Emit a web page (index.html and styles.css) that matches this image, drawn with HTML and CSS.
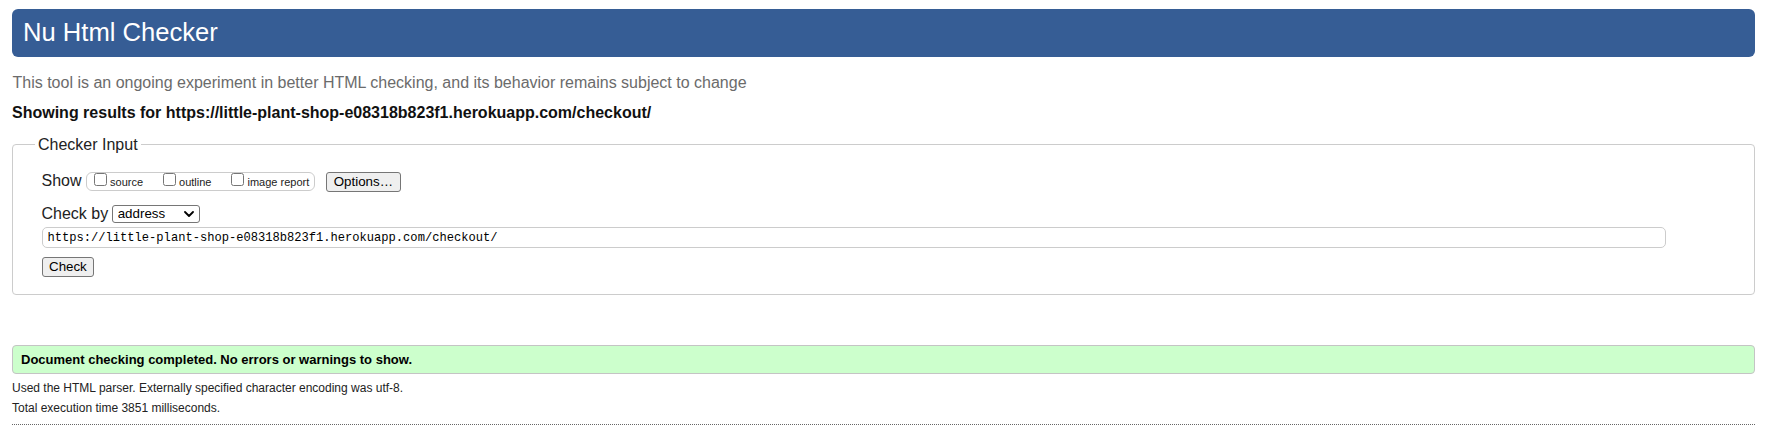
FILE: index.html
```html
<!DOCTYPE html>
<html lang="en">
<head>
<meta charset="utf-8">
<title>Nu Html Checker</title>
<link rel="stylesheet" href="styles.css">
</head>
<body>
<div class="page">
  <h1 class="banner">Nu Html Checker</h1>
  <p class="intro">This tool is an ongoing experiment in better HTML checking, and its behavior remains subject to change</p>
  <p class="showing">Showing results for https://little-plant-shop-e08318b823f1.herokuapp.com/checkout/</p>
  <fieldset class="checker">
    <legend class="checker-legend">Checker Input</legend>
    <div class="checker-body">
      <div class="row row-show">
        <span class="row-label">Show</span>
        <div class="opts">
          <label class="opt"><input type="checkbox" class="cb"><span class="opt-text">source</span></label>
          <label class="opt"><input type="checkbox" class="cb"><span class="opt-text">outline</span></label>
          <label class="opt opt-last"><input type="checkbox" class="cb"><span class="opt-text">image report</span></label>
        </div>
        <button type="button" class="btn btn-options">Options…</button>
      </div>
      <div class="row row-by">
        <span class="row-label">Check by</span>
        <span class="select-wrap">
          <select class="by-select"><option>address</option></select>
          <svg class="chevron" width="10" height="6" viewBox="0 0 10 6" aria-hidden="true"><path d="M1 1 L5 5 L9 1" fill="none" stroke="#000" stroke-width="1.8" stroke-linecap="round" stroke-linejoin="round"/></svg>
        </span>
      </div>
      <input class="url" type="text" value="https://little-plant-shop-e08318b823f1.herokuapp.com/checkout/">
      <div class="row row-submit">
        <button type="button" class="btn btn-check">Check</button>
      </div>
    </div>
  </fieldset>
  <div class="success">Document checking completed. No errors or warnings to show.</div>
  <p class="meta meta-first">Used the HTML parser. Externally specified character encoding was utf-8.</p>
  <p class="meta">Total execution time 3851 milliseconds.</p>
  <hr class="rule">
</div>
</body>
</html>
```

FILE: styles.css
```css
* { box-sizing: border-box; }

html, body {
  margin: 0;
  padding: 0;
  background: #ffffff;
}

body {
  font-family: "Liberation Sans", Arial, sans-serif;
  color: #111111;
  font-size: 16px;
}

.page {
  padding: 9px 36px 0 12px;
}

.banner {
  margin: 0;
  height: 48px;
  background: #365d95;
  color: #ffffff;
  border-radius: 6px;
  font-weight: normal;
  font-size: 25.6px;
  line-height: 46px;
  padding: 0 11px 2px 11px;
}

.intro {
  margin: 17px 0 0 0;
  font-size: 16px;
  line-height: 18px;
  color: #6b6b6b;
  padding-left: 0.5px;
}

.showing {
  margin: 12px 0 0 0;
  font-size: 16px;
  line-height: 18px;
  font-weight: bold;
  color: #111111;
}

.checker {
  margin: 13.5px 0 0 0;
  border: 1px solid #cccccc;
  border-radius: 4px;
  padding: 0 26px 17px 22px;
  min-width: 0;
}

.checker-legend {
  font-size: 16px;
  line-height: 18px;
  padding: 0 3px;
  color: #222222;
}

.checker-body {
  padding-left: 6.5px;
}

.row {
  display: flex;
  align-items: center;
}

.row-show {
  margin-top: 18.5px;
  height: 20px;
}

.row-label {
  font-size: 16px;
  line-height: 18px;
  color: #222222;
  margin-bottom: 3px;
}

.opts {
  display: flex;
  align-items: flex-start;
  height: 19px;
  margin-left: 4.5px;
  border: 1px solid #cccccc;
  border-radius: 6px;
  padding: 0 5px 0 3px;
  margin-top: -1px;
}

.opt {
  display: flex;
  align-items: flex-end;
  margin-right: 16px;
}

.opt-last {
  margin-right: 0;
}

.cb {
  width: 13px;
  height: 13px;
  margin: 0 3px 0 4px;
}

.opt-text {
  font-size: 11px;
  line-height: 11px;
  margin-bottom: -2px;
  color: #222222;
}

.btn {
  font-family: "Liberation Sans", Arial, sans-serif;
  font-size: 13.33px;
  height: 20px;
  padding: 0 6.5px;
  border: 1px solid #767676;
  border-radius: 3px;
  background: #efefef;
  color: #000000;
  line-height: 18px;
}

.btn-options {
  margin-left: 11px;
}

.row-by {
  margin-top: 13px;
  height: 18px;
}

.row-by .row-label {
  margin-bottom: 0;
}

.select-wrap {
  position: relative;
  display: block;
  margin-left: 3.5px;
  width: 88px;
  height: 18px;
}

.by-select {
  display: block;
  appearance: none;
  -webkit-appearance: none;
  width: 88px;
  height: 18px;
  font-family: "Liberation Sans", Arial, sans-serif;
  font-size: 13.33px;
  line-height: 16px;
  border: 1px solid #767676;
  border-radius: 3px;
  background: #ffffff;
  color: #000000;
  padding: 0 0 0 5px;
}

.chevron {
  position: absolute;
  left: 72px;
  top: 6px;
  pointer-events: none;
}

.url {
  display: block;
  margin-top: 4px;
  width: calc(100% - 62px);
  height: 21px;
  border: 1px solid #cccccc;
  border-radius: 5px;
  padding: 0 5px;
  font-family: "Liberation Mono", "DejaVu Sans Mono", monospace;
  font-size: 12.1px;
  color: #000000;
  background: #ffffff;
}

.row-submit {
  margin-top: 9px;
}

.success {
  margin-top: 49.5px;
  height: 29.5px;
  background: #ccffcc;
  border: 1px solid #c4c4c4;
  border-radius: 4px;
  font-weight: bold;
  font-size: 13px;
  line-height: 27.5px;
  padding: 0 8px;
  color: #000000;
}

.meta {
  margin: 6.7px 0 0 0;
  font-size: 12px;
  line-height: 14px;
  color: #222222;
}

.meta-first {
  margin-top: 6.5px;
}

.rule {
  margin: 8.6px 0 0 0;
  border: 0;
  border-top: 1px dotted #666666;
  height: 0;
}
```
